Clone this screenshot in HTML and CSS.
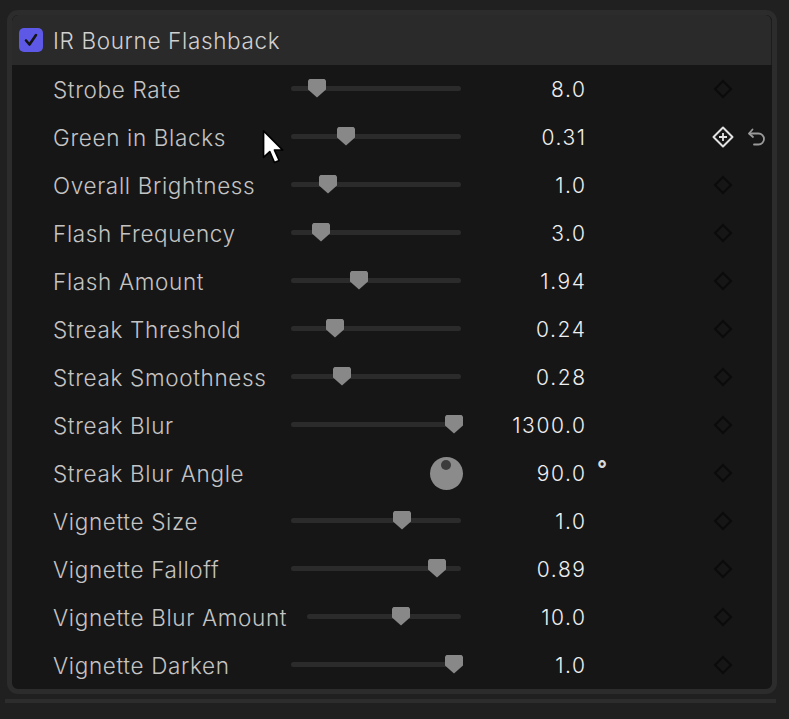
FILE: index.html
```html
<!DOCTYPE html>
<html>
<head>
<meta charset="utf-8">
<link rel="stylesheet" href="styles.css">
</head>
<body>
<div class="panel">
  <div class="header">
    <span class="checkbox"><svg width="24" height="24" viewBox="0 0 24 24"><path d="M7 12.5 L10.5 16.5 L17 7" fill="none" stroke="#141414" stroke-width="2.6" stroke-linecap="round" stroke-linejoin="round"/></svg></span>
    <span class="title">IR Bourne Flashback</span>
  </div>
  <div class="rows">
    <div class="row"><span class="label">Strobe Rate</span><div class="slider"><div class="track"></div><div class="thumb" style="left:17px"></div></div><span class="value">8.0</span><span class="unit"></span><span class="kf"><svg width="20" height="20" viewBox="0 0 20 20"><path d="M10 2 L18 10 L10 18 L2 10 Z" fill="none" stroke="#0b0b0b" stroke-width="2"/></svg></span><span class="reset"></span></div>
    <div class="row"><span class="label">Green in Blacks</span><div class="slider"><div class="track"></div><div class="thumb" style="left:46px"></div></div><span class="value">0.31</span><span class="unit"></span><span class="kf"><svg width="24" height="24" viewBox="0 0 24 24"><path d="M12 2.5 L21.5 12 L12 21.5 L2.5 12 Z" fill="none" stroke="#e2e2e2" stroke-width="2" stroke-linejoin="round"/><path d="M12 8 V16 M8 12 H16" stroke="#e2e2e2" stroke-width="1.8"/></svg></span><span class="reset"><svg width="22" height="24" viewBox="0 0 22 24"><path d="M6.5 4.5 L3 8.5 L7 12" fill="none" stroke="#9a9a9a" stroke-width="1.8" stroke-linejoin="round" stroke-linecap="round"/><path d="M3.5 8.5 H12.5 A5.5 5.5 0 0 1 12.5 19.5 H8" fill="none" stroke="#9a9a9a" stroke-width="1.8" stroke-linecap="round"/></svg></span></div>
    <div class="row"><span class="label">Overall Brightness</span><div class="slider"><div class="track"></div><div class="thumb" style="left:28px"></div></div><span class="value">1.0</span><span class="unit"></span><span class="kf"><svg width="20" height="20" viewBox="0 0 20 20"><path d="M10 2 L18 10 L10 18 L2 10 Z" fill="none" stroke="#0b0b0b" stroke-width="2"/></svg></span><span class="reset"></span></div>
    <div class="row"><span class="label">Flash Frequency</span><div class="slider"><div class="track"></div><div class="thumb" style="left:21px"></div></div><span class="value">3.0</span><span class="unit"></span><span class="kf"><svg width="20" height="20" viewBox="0 0 20 20"><path d="M10 2 L18 10 L10 18 L2 10 Z" fill="none" stroke="#0b0b0b" stroke-width="2"/></svg></span><span class="reset"></span></div>
    <div class="row"><span class="label">Flash Amount</span><div class="slider"><div class="track"></div><div class="thumb" style="left:59px"></div></div><span class="value">1.94</span><span class="unit"></span><span class="kf"><svg width="20" height="20" viewBox="0 0 20 20"><path d="M10 2 L18 10 L10 18 L2 10 Z" fill="none" stroke="#0b0b0b" stroke-width="2"/></svg></span><span class="reset"></span></div>
    <div class="row"><span class="label">Streak Threshold</span><div class="slider"><div class="track"></div><div class="thumb" style="left:35px"></div></div><span class="value">0.24</span><span class="unit"></span><span class="kf"><svg width="20" height="20" viewBox="0 0 20 20"><path d="M10 2 L18 10 L10 18 L2 10 Z" fill="none" stroke="#0b0b0b" stroke-width="2"/></svg></span><span class="reset"></span></div>
    <div class="row"><span class="label">Streak Smoothness</span><div class="slider"><div class="track"></div><div class="thumb" style="left:42px"></div></div><span class="value">0.28</span><span class="unit"></span><span class="kf"><svg width="20" height="20" viewBox="0 0 20 20"><path d="M10 2 L18 10 L10 18 L2 10 Z" fill="none" stroke="#0b0b0b" stroke-width="2"/></svg></span><span class="reset"></span></div>
    <div class="row"><span class="label">Streak Blur</span><div class="slider"><div class="track"></div><div class="thumb" style="left:154px"></div></div><span class="value">1300.0</span><span class="unit"></span><span class="kf"><svg width="20" height="20" viewBox="0 0 20 20"><path d="M10 2 L18 10 L10 18 L2 10 Z" fill="none" stroke="#0b0b0b" stroke-width="2"/></svg></span><span class="reset"></span></div>
    <div class="row"><span class="label">Streak Blur Angle</span><div class="slider knob-wrap"><div class="knob"><div class="knob-dot"></div></div></div><span class="value">90.0</span><span class="unit">°</span><span class="kf"><svg width="20" height="20" viewBox="0 0 20 20"><path d="M10 2 L18 10 L10 18 L2 10 Z" fill="none" stroke="#0b0b0b" stroke-width="2"/></svg></span><span class="reset"></span></div>
    <div class="row"><span class="label">Vignette Size</span><div class="slider"><div class="track"></div><div class="thumb" style="left:102px"></div></div><span class="value">1.0</span><span class="unit"></span><span class="kf"><svg width="20" height="20" viewBox="0 0 20 20"><path d="M10 2 L18 10 L10 18 L2 10 Z" fill="none" stroke="#0b0b0b" stroke-width="2"/></svg></span><span class="reset"></span></div>
    <div class="row"><span class="label">Vignette Falloff</span><div class="slider"><div class="track"></div><div class="thumb" style="left:137px"></div></div><span class="value">0.89</span><span class="unit"></span><span class="kf"><svg width="20" height="20" viewBox="0 0 20 20"><path d="M10 2 L18 10 L10 18 L2 10 Z" fill="none" stroke="#0b0b0b" stroke-width="2"/></svg></span><span class="reset"></span></div>
    <div class="row"><span class="label">Vignette Blur Amount</span><div class="slider short"><div class="track"></div><div class="thumb" style="left:85px"></div></div><span class="value">10.0</span><span class="unit"></span><span class="kf"><svg width="20" height="20" viewBox="0 0 20 20"><path d="M10 2 L18 10 L10 18 L2 10 Z" fill="none" stroke="#0b0b0b" stroke-width="2"/></svg></span><span class="reset"></span></div>
    <div class="row"><span class="label">Vignette Darken</span><div class="slider"><div class="track"></div><div class="thumb" style="left:154px"></div></div><span class="value">1.0</span><span class="unit"></span><span class="kf"><svg width="20" height="20" viewBox="0 0 20 20"><path d="M10 2 L18 10 L10 18 L2 10 Z" fill="none" stroke="#0b0b0b" stroke-width="2"/></svg></span><span class="reset"></span></div>
  </div>
</div>
<div class="bottom-bar"></div>
<svg class="cursor" width="27" height="40" viewBox="0 0 26 38"><path d="M1.5 1.5 L1.5 27 L7.5 21.5 L12 32 L16.5 30 L12 20 L20 20 Z" fill="#ffffff" stroke="#000000" stroke-width="1.6" stroke-linejoin="round"/></svg>
</body>
</html>
```
FILE: styles.css
```css
html, body {
  margin: 0;
  padding: 0;
}
body {
  background: #202020;
  width: 789px;
  height: 719px;
  overflow: hidden;
  position: relative;
  font-family: Inter, "Noto Sans", sans-serif;
  padding-top: 10px;
  box-sizing: border-box;
}
.panel {
  margin-left: 7px;
  width: 770px;
  box-sizing: border-box;
  border: 5px solid #2c2c2c;
  border-radius: 11px;
  background: #161616;
  overflow: hidden;
}
.header {
  height: 50px;
  background: #2a2a2a;
  border-radius: 6px 6px 0 0;
  display: flex;
  align-items: center;
  padding-left: 7px;
  box-sizing: border-box;
  border-right: 1px solid #1c1c1c;
}
.checkbox {
  width: 24px;
  height: 24px;
  border-radius: 5px;
  background: #5d58e6;
  display: flex;
}
.title {
  margin-left: 10px;
  font-size: 22.5px;
  font-weight: 300;
  color: #d0d0d0;
  letter-spacing: 0.65px;
}
.row {
  height: 48px;
  display: grid;
  grid-template-columns: 238px 170px 124px 1fr 38px 30px;
  align-items: center;
  padding-left: 41px;
}
.label {
  font-size: 22.5px;
  font-weight: 300;
  color: #c4c4c4;
  letter-spacing: 0.65px;
}
.slider {
  position: relative;
  height: 20px;
  margin-top: 1px;
}
.slider.short {
  margin-left: 16px;
}
.track {
  position: absolute;
  left: 0;
  right: 0;
  top: 6px;
  height: 5px;
  border-radius: 3px;
  background: #2b2b2b;
}
.thumb {
  position: absolute;
  top: -1px;
  width: 18px;
  height: 19px;
  background: #888888;
  clip-path: polygon(2px 0, 16px 0, 18px 2px, 18px 11px, 9px 19px, 0 11px, 0 2px);
}
.knob-wrap {
  display: flex;
  justify-content: flex-end;
  align-items: center;
  height: 34px;
}
.knob {
  width: 33px;
  height: 33px;
  border-radius: 50%;
  background: #8b8b8b;
  margin-right: -2px;
  position: relative;
}
.knob-dot {
  position: absolute;
  left: 11px;
  top: 3px;
  width: 10px;
  height: 10px;
  border-radius: 50%;
  background: #3c3c3c;
}
.value {
  text-align: right;
  font-size: 21px;
  font-weight: 300;
  color: #efefef;
  letter-spacing: 1.6px;
  margin-right: -1.6px;
}
.unit {
  font-size: 22px;
  color: #d8d8d8;
  padding-left: 12px;
  font-weight: bold;
  align-self: center;
  margin-top: -10px;
}
.kf, .reset {
  display: flex;
  justify-content: center;
  align-items: center;
}
.bottom-bar {
  margin: 5px 13px 0 5px;
  height: 4px;
  background: #2d2d2d;
}
.cursor {
  position: absolute;
  left: 262px;
  top: 129px;
}
```
